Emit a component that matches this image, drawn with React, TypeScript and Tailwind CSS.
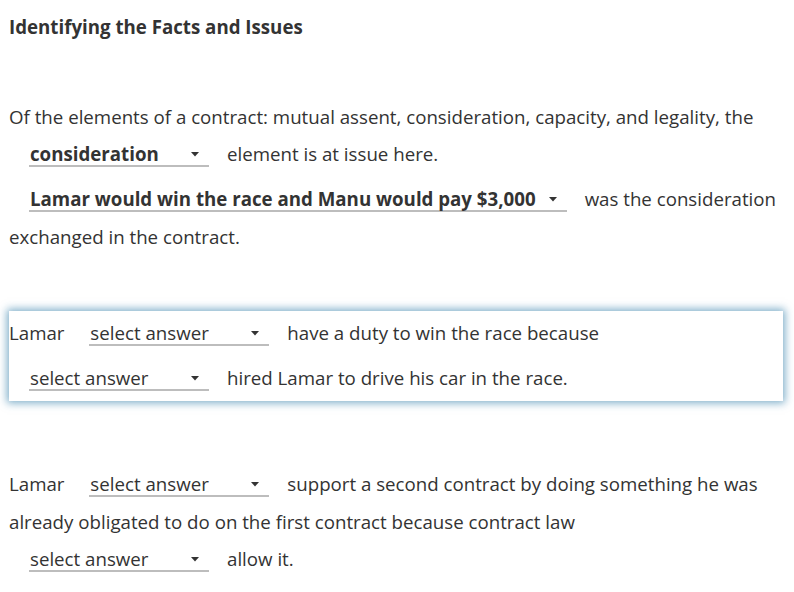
import React from 'react';

function Caret() {
    return (
        <svg width="8" height="5" viewBox="0 0 8 5" className="shrink-0">
            <path d="M0 0h8L4 4.5z" fill="#333" />
        </svg>
    );
}

interface DropProps {
    value: string;
    bold?: boolean;
}

// inline dropdown that sits in the sentence
function Drop({ value, bold }: DropProps) {
    return (
        <span
            className={
                'inline-flex items-center justify-between gap-[13px] min-w-[180px] ml-5 mr-[18px] mt-[11px] mb-[10px] pl-px pr-[10px] border-b-2 border-[#bdbdbd] leading-[22px] align-baseline ' +
                (bold ? 'font-bold' : 'font-normal')
            }
        >
            <span>{value}</span>
            <Caret />
        </span>
    );
}

export default function App() {
    return (
        <div
            className="bg-white min-h-[592px] pt-3 pl-[9px] pr-[11px] text-[#333] text-[18.7px] leading-[30px]"
            style={{ fontFamily: '"Open Sans", "Noto Sans", sans-serif' }}
        >
            <h1 className="font-bold">Identifying the Facts and Issues</h1>

            <p className="mt-[60px]">
                Of the elements of a contract: mutual assent, consideration, capacity, and legality, the
                <Drop value="consideration" bold />
                element is at issue here.
                <Drop value="Lamar would win the race and Manu would pay $3,000" bold />
                was the consideration exchanged in the contract.
            </p>

            <p className="mt-[59px] bg-white shadow-[0_0_8px_2px_rgba(40,120,165,0.6)]">
                Lamar <Drop value="select answer" />
                have a duty to win the race because
                <Drop value="select answer" />
                hired Lamar to drive his car in the race.
            </p>

            <p className="mt-[61px]">
                Lamar <Drop value="select answer" />
                support a second contract by doing something he was already obligated to do on the first contract because contract law
                <Drop value="select answer" />
                allow it.
            </p>
        </div>
    );
}
